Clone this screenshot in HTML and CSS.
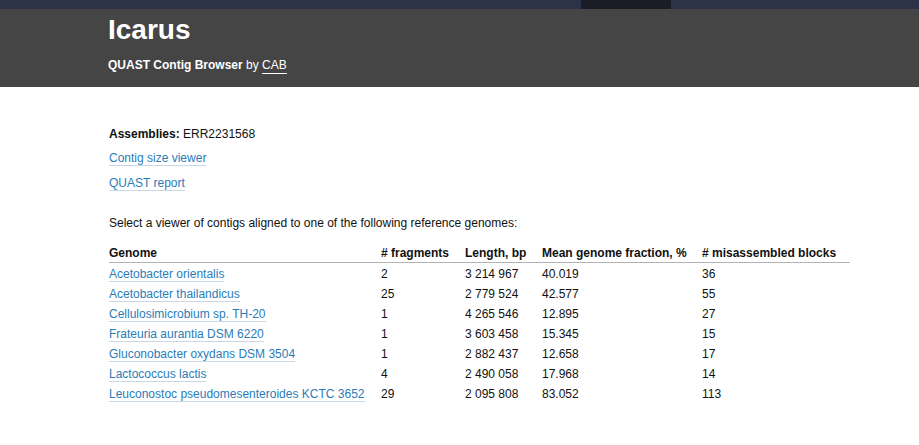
FILE: index.html
```html
<!DOCTYPE html>
<html>
<head>
<meta charset="utf-8">
<link rel="stylesheet" href="styles.css">
</head>
<body>
<div class="topbar"><div class="tb-left"></div><div class="tb-active"></div><div class="tb-right"></div></div>
<header class="header">
  <div class="wrap">
    <h1 class="title">Icarus</h1>
    <p class="subtitle"><b>QUAST Contig Browser</b> by <a class="cab" href="#">CAB</a></p>
  </div>
</header>
<main class="content">
  <p class="assemblies"><b>Assemblies:</b> ERR2231568</p>
  <p class="linkrow"><a class="lnk" href="#">Contig size viewer</a></p>
  <p class="linkrow"><a class="lnk" href="#">QUAST report</a></p>
  <p class="select">Select a viewer of contigs aligned to one of the following reference genomes:</p>
  <table class="refs">
    <colgroup><col class="c1"><col class="c2"><col class="c3"><col class="c4"><col class="c5"></colgroup>
    <thead>
      <tr><th>Genome</th><th># fragments</th><th>Length, bp</th><th>Mean genome fraction, %</th><th># misassembled blocks</th></tr>
    </thead>
    <tbody>
      <tr><td><a class="lnk" href="#">Acetobacter orientalis</a></td><td>2</td><td>3 214 967</td><td>40.019</td><td>36</td></tr>
      <tr><td><a class="lnk" href="#">Acetobacter thailandicus</a></td><td>25</td><td>2 779 524</td><td>42.577</td><td>55</td></tr>
      <tr><td><a class="lnk" href="#">Cellulosimicrobium sp. TH-20</a></td><td>1</td><td>4 265 546</td><td>12.895</td><td>27</td></tr>
      <tr><td><a class="lnk" href="#">Frateuria aurantia DSM 6220</a></td><td>1</td><td>3 603 458</td><td>15.345</td><td>15</td></tr>
      <tr><td><a class="lnk" href="#">Gluconobacter oxydans DSM 3504</a></td><td>1</td><td>2 882 437</td><td>12.658</td><td>17</td></tr>
      <tr><td><a class="lnk" href="#">Lactococcus lactis</a></td><td>4</td><td>2 490 058</td><td>17.968</td><td>14</td></tr>
      <tr><td><a class="lnk" href="#">Leuconostoc pseudomesenteroides KCTC 3652</a></td><td>29</td><td>2 095 808</td><td>83.052</td><td>113</td></tr>
    </tbody>
  </table>
</main>
</body>
</html>
```
FILE: styles.css
```css
html, body {
  margin: 0;
  padding: 0;
  background: #fff;
  font-family: "Liberation Sans", Arial, sans-serif;
  font-size: 12px;
  color: #111;
}
.topbar {
  display: flex;
  height: 9px;
}
.tb-left { width: 581px; background: #2c3248; }
.tb-active { width: 90px; background: #1b1d26; }
.tb-right { flex: 1; background: #2c3248; }
.header {
  background: #454545;
  height: 78px;
  color: #fff;
  box-sizing: border-box;
  padding-top: 5px;
}
.wrap {
  margin-left: 108px;
}
.title {
  margin: 0;
  font-size: 28px;
  line-height: 32px;
  font-weight: bold;
}
.subtitle {
  margin: 12px 0 0;
  line-height: 15px;
}
.cab {
  color: #fff;
  text-decoration: none;
  border-bottom: 1px solid #fff;
  padding-bottom: 1px;
}
.content {
  margin-left: 109px;
  padding-top: 40px;
}
.content p {
  margin: 0;
  line-height: 15px;
}
.content .assemblies { margin-bottom: 9px; }
.content .linkrow { margin-bottom: 10px; }
.content .select { margin-top: 25px; }
.lnk {
  color: #2a7cb8;
  text-decoration: none;
  border-bottom: 1px solid #c9d8e4;
}
.refs {
  margin-top: 15px;
  border-collapse: collapse;
  table-layout: fixed;
  width: 741px;
}
.c1 { width: 272px; }
.c2 { width: 84px; }
.c3 { width: 77px; }
.c4 { width: 160px; }
.c5 { width: 148px; }
.refs th {
  text-align: left;
  font-weight: bold;
  line-height: 15px;
  padding: 0 0 1px;
  border-bottom: 1px solid #b3b3b3;
  white-space: nowrap;
}
.refs td {
  line-height: 15px;
  padding: 4px 0 1px;
  white-space: nowrap;
}
```
